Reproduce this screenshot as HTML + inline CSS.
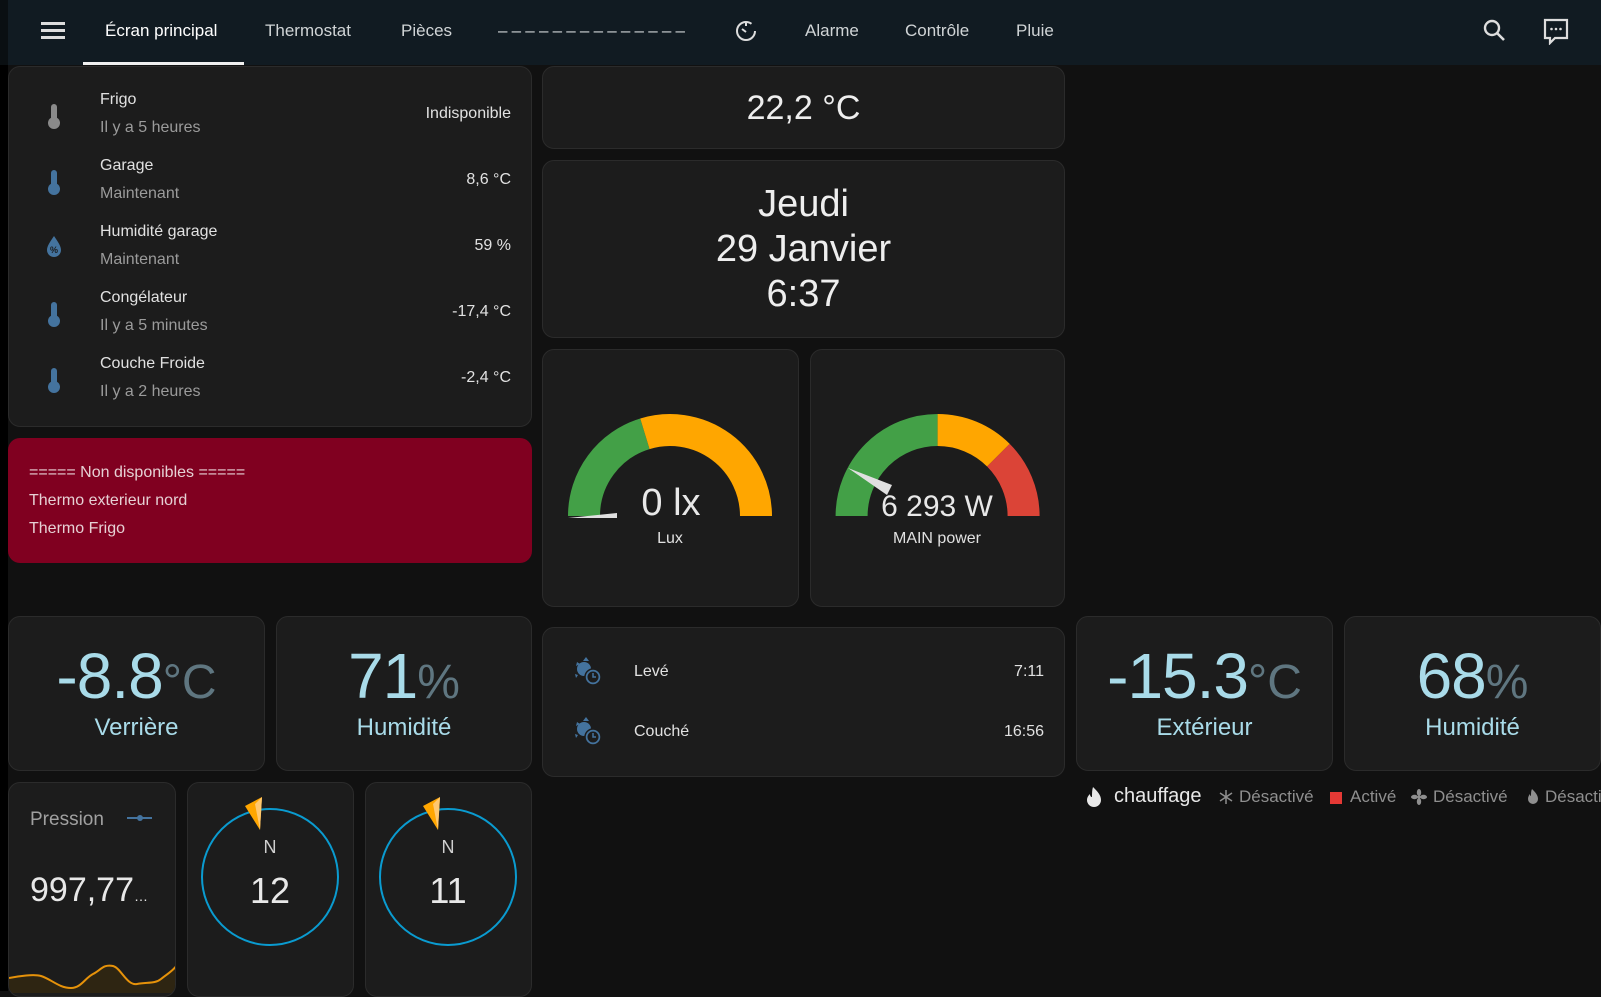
<!DOCTYPE html>
<html><head><meta charset="utf-8"><style>
*{box-sizing:border-box;margin:0;padding:0}
body{width:1601px;height:991px;background:#111111;font-family:"Liberation Sans",sans-serif;color:#e1e1e1;position:relative;overflow:hidden}
.a{position:absolute}
.card{position:absolute;background:#1c1c1c;border:1px solid #2b2b2b;border-radius:12px}
.nav{position:absolute;left:0;top:0;width:1601px;height:65px;background:#111b22}
.tab{position:absolute;top:21px;font-size:17px;color:#d0d4d6;white-space:nowrap}
.nm{position:absolute;left:91px;font-size:16px;color:#e1e1e1}
.sb{position:absolute;left:91px;font-size:16px;color:#9b9b9b}
.vl{position:absolute;right:20px;font-size:16px;color:#e1e1e1;text-align:right}
.big{position:absolute;width:100%;text-align:center;color:#a9dbe9;font-size:64px;letter-spacing:-1px}
.big span{font-size:48px;color:#5f7680;letter-spacing:0}
.lbl{position:absolute;width:100%;text-align:center;color:#a9dbe9;font-size:24px}
</style></head><body>
<div class="a" style="left:0;top:0;width:8px;height:991px;background:#000"></div>
<div class="nav"></div>
<div class="a" style="left:0;top:0;width:8px;height:65px;background:#0a0f12"></div>
<div class="a" style="left:41px;top:22px;width:24px;height:3px;background:#ddd"></div>
<div class="a" style="left:41px;top:29px;width:24px;height:3px;background:#ddd"></div>
<div class="a" style="left:41px;top:36px;width:24px;height:3px;background:#ddd"></div>
<div class="tab" style="left:105px;color:#fff">Écran principal</div>
<div class="a" style="left:83px;top:62px;width:161px;height:3px;background:#f0f0f0"></div>
<div class="tab" style="left:265px">Thermostat</div>
<div class="tab" style="left:401px">Pièces</div>
<div class="tab" style="left:498px;letter-spacing:4.2px">‒‒‒‒‒‒‒‒‒‒‒‒‒‒</div>
<svg class="a" style="left:734px;top:19px" width="24" height="24" viewBox="0 0 24 24"><circle cx="12" cy="12" r="9" fill="none" stroke="#ddd" stroke-width="2" stroke-dasharray="48 9"/><path d="M12 4v3M8 10l4 3" stroke="#ddd" stroke-width="2" fill="none"/></svg>
<div class="tab" style="left:805px">Alarme</div>
<div class="tab" style="left:905px">Contrôle</div>
<div class="tab" style="left:1016px">Pluie</div>
<svg class="a" style="left:1482px;top:18px" width="26" height="26" viewBox="0 0 26 26"><circle cx="10" cy="10" r="7" fill="none" stroke="#ddd" stroke-width="2.4"/><path d="M15 15l7 7" stroke="#ddd" stroke-width="2.6"/></svg>
<svg class="a" style="left:1542px;top:17px" width="28" height="28" viewBox="0 0 28 28"><path d="M3 3h22v18H13l-5 5v-5H3z" fill="none" stroke="#ddd" stroke-width="2.2"/><circle cx="9.5" cy="12" r="1.3" fill="#ddd"/><circle cx="14" cy="12" r="1.3" fill="#ddd"/><circle cx="18.5" cy="12" r="1.3" fill="#ddd"/></svg>

<div class="card" style="left:8px;top:66px;width:524px;height:361px">
 <div class="nm" style="top:24px">Frigo</div><div class="sb" style="top:52px">Il y a 5 heures</div><div class="vl" style="top:38px">Indisponible</div>
 <div class="nm" style="top:90px">Garage</div><div class="sb" style="top:118px">Maintenant</div><div class="vl" style="top:104px">8,6 °C</div>
 <div class="nm" style="top:156px">Humidité garage</div><div class="sb" style="top:184px">Maintenant</div><div class="vl" style="top:170px">59 %</div>
 <div class="nm" style="top:222px">Congélateur</div><div class="sb" style="top:250px">Il y a 5 minutes</div><div class="vl" style="top:236px">-17,4 °C</div>
 <div class="nm" style="top:288px">Couche Froide</div><div class="sb" style="top:316px">Il y a 2 heures</div><div class="vl" style="top:302px">-2,4 °C</div>
</div>
<svg class="a" style="left:0;top:0" width="1601" height="991">
 <defs><g id="th"><rect x="-3" y="-12" width="6" height="18" rx="3"/><circle cx="0" cy="7" r="6"/></g></defs>
 <use href="#th" x="54" y="116" fill="#8a8a8a"/>
 <use href="#th" x="54" y="182" fill="#44739e"/>
 <use href="#th" x="54" y="314" fill="#44739e"/>
 <use href="#th" x="54" y="380" fill="#44739e"/>
 <path d="M54 236c-4 6-7 10-7 14a7 7 0 0 0 14 0c0-4-3-8-7-14z" fill="#44739e"/>
 <text x="54" y="253" font-size="9" fill="#1c1c1c" text-anchor="middle" font-family="Liberation Sans" font-weight="bold">%</text>
</svg>

<div class="a" style="left:8px;top:438px;width:524px;height:125px;background:#800020;border-radius:12px;font-size:16px;color:#e6d0d4">
 <div class="a" style="left:21px;top:26px">===== Non disponibles =====</div>
 <div class="a" style="left:21px;top:54px">Thermo exterieur nord</div>
 <div class="a" style="left:21px;top:82px">Thermo Frigo</div>
</div>

<div class="card" style="left:542px;top:66px;width:523px;height:83px"><div class="a" style="width:100%;text-align:center;top:22px;font-size:34px;color:#eee">22,2 °C</div></div>
<div class="card" style="left:542px;top:160px;width:523px;height:178px;text-align:center;font-size:38px;color:#eee">
 <div class="a" style="width:100%;top:22px">Jeudi</div>
 <div class="a" style="width:100%;top:67px">29 Janvier</div>
 <div class="a" style="width:100%;top:112px">6:37</div>
</div>

<div class="card" style="left:542px;top:349px;width:257px;height:258px"></div>
<div class="card" style="left:810px;top:349px;width:255px;height:258px"></div>
<svg class="a" style="left:0;top:0" width="1601" height="991">
 <path d="M584 516A86 86 0 0 1 644.9 433.8" fill="none" stroke="#43a047" stroke-width="32"/>
 <path d="M644.9 433.8A86 86 0 0 1 756 516" fill="none" stroke="#ffa600" stroke-width="32"/>
 <polygon points="568,518 617,518 617,513" fill="#e0e0e0"/>
 <path d="M851.6 516A86 86 0 0 1 937.6 430" fill="none" stroke="#43a047" stroke-width="32"/>
 <path d="M937.6 430A86 86 0 0 1 998.4 455.2" fill="none" stroke="#ffa600" stroke-width="32"/>
 <path d="M998.4 455.2A86 86 0 0 1 1023.6 516" fill="none" stroke="#db4437" stroke-width="32"/>
 <polygon points="848,468 892,485 887,495" fill="#e0e0e0"/>
 <text x="671" y="515" font-size="38" fill="#e8e8e8" text-anchor="middle" font-family="Liberation Sans">0 lx</text>
 <text x="670" y="543" font-size="16" fill="#e1e1e1" text-anchor="middle" font-family="Liberation Sans">Lux</text>
 <text x="937" y="516" font-size="30" fill="#e8e8e8" text-anchor="middle" font-family="Liberation Sans">6 293 W</text>
 <text x="937" y="543" font-size="16" fill="#e1e1e1" text-anchor="middle" font-family="Liberation Sans">MAIN power</text>
</svg>

<div class="card" style="left:8px;top:616px;width:257px;height:155px"><div class="big" style="top:22px">-8.8<span>°C</span></div><div class="lbl" style="top:97px">Verrière</div></div>
<div class="card" style="left:276px;top:616px;width:256px;height:155px"><div class="big" style="top:22px">71<span>%</span></div><div class="lbl" style="top:97px">Humidité</div></div>
<div class="card" style="left:1076px;top:616px;width:257px;height:155px"><div class="big" style="top:22px">-15.3<span>°C</span></div><div class="lbl" style="top:97px">Extérieur</div></div>
<div class="card" style="left:1344px;top:616px;width:257px;height:155px"><div class="big" style="top:22px">68<span>%</span></div><div class="lbl" style="top:97px">Humidité</div></div>

<div class="card" style="left:542px;top:627px;width:523px;height:150px;font-size:16px;color:#e1e1e1">
 <div class="a" style="left:91px;top:35px">Levé</div><div class="a" style="right:20px;top:35px">7:11</div>
 <div class="a" style="left:91px;top:95px">Couché</div><div class="a" style="right:20px;top:95px">16:56</div>
</div>
<svg class="a" style="left:0;top:0" width="1601" height="991">
 <g id="sun" fill="#44739e"><circle cx="584" cy="669" r="7"/><path d="M586 657l3 4h-6zM577 662l-1 4 4-2zM575 674l1 4 2-3z"/><circle cx="593" cy="677" r="8" fill="#44739e" stroke="#1c1c1c" stroke-width="1.5"/><circle cx="593" cy="677" r="5.5" fill="#1c1c1c"/><path d="M593 673v4h3" stroke="#44739e" stroke-width="1.5" fill="none"/></g>
 <use href="#sun" y="60"/>
</svg>

<div class="card" style="left:8px;top:782px;width:168px;height:215px;overflow:hidden">
 <div class="a" style="left:21px;top:26px;font-size:19px;color:#a0a0a0">Pression</div>
 <div class="a" style="left:21px;top:88px;font-size:34px;color:#e8e8e8">997,77<span style="font-size:14px">…</span></div>
 <svg class="a" style="left:0;top:150px" width="168" height="60"><path d="M0 45c10-2 25-4 32-2 10 3 18 12 30 12 10 0 14-10 22-14s10-10 20-8c8 2 14 20 24 18 10-2 18 0 24-5s12-8 16-14V60H0z" fill="#2e2512"/><path d="M0 45c10-2 25-4 32-2 10 3 18 12 30 12 10 0 14-10 22-14s10-10 20-8c8 2 14 20 24 18 10-2 18 0 24-5s12-8 16-14" fill="none" stroke="#e6920a" stroke-width="2"/></svg>
</div>
<svg class="a" style="left:0;top:0" width="1601" height="991">
 <line x1="127" y1="818" x2="152" y2="818" stroke="#44739e" stroke-width="2"/><circle cx="140" cy="818" r="3" fill="#44739e"/>
</svg>
<div class="card" style="left:187px;top:782px;width:167px;height:215px"></div>
<div class="card" style="left:365px;top:782px;width:167px;height:215px"></div>
<svg class="a" style="left:0;top:0" width="1601" height="991">
 <circle cx="270" cy="877" r="68" fill="none" stroke="#0a9bd0" stroke-width="2"/>
 <circle cx="448" cy="877" r="68" fill="none" stroke="#0a9bd0" stroke-width="2"/>
 <polygon points="245,806 262,797 260,830" fill="#ffa600"/><polygon points="255,804 262,797 260,830" fill="#ffc870"/>
 <polygon points="423,806 440,797 438,830" fill="#ffa600"/><polygon points="433,804 440,797 438,830" fill="#ffc870"/>
 <g font-family="Liberation Sans" text-anchor="middle">
 <text x="270" y="853" font-size="18" fill="#cfcfcf">N</text><text x="270" y="903" font-size="36" fill="#e8e8e8">12</text>
 <text x="448" y="853" font-size="18" fill="#cfcfcf">N</text><text x="448" y="903" font-size="36" fill="#e8e8e8">11</text>
 </g>
</svg>

<svg class="a" style="left:0;top:0" width="1601" height="991">
 <path d="M1093 787c4 4 8 8 8 13a7 7 0 0 1-14 0c0-3 2-5 3-6 0 2 1 3 2 3 0-4 0-7 1-10z" fill="#e8e8e8"/>
 <g stroke="#8f8f8f" stroke-width="1.5"><line x1="1226" y1="790" x2="1226" y2="804"/><line x1="1220" y1="793" x2="1232" y2="801"/><line x1="1220" y1="801" x2="1232" y2="793"/></g>
 <rect x="1330" y="792" width="12" height="12" fill="#e53935"/>
 <g fill="#8f8f8f"><circle cx="1419" cy="797" r="1.5"/><ellipse cx="1419" cy="792.5" rx="2.2" ry="3.5"/><ellipse cx="1419" cy="801.5" rx="2.2" ry="3.5"/><ellipse cx="1414.5" cy="797" rx="3.5" ry="2.2"/><ellipse cx="1423.5" cy="797" rx="3.5" ry="2.2"/></g>
 <path d="M1532 789c3 3 6 6 6 10a5 5 0 0 1-10 0c0-2 1-4 2-5 0 2 1 2 1 2 0-3 0-5 1-7z" fill="#8f8f8f"/>
</svg>
<div class="a" style="left:1114px;top:785px;font-size:20px;color:#e8e8e8">chauffage</div>
<div class="a" style="left:1239px;top:787px;font-size:17px;color:#8f8f8f">Désactivé</div>
<div class="a" style="left:1350px;top:787px;font-size:17px;color:#8f8f8f">Activé</div>
<div class="a" style="left:1433px;top:787px;font-size:17px;color:#8f8f8f">Désactivé</div>
<div class="a" style="left:1545px;top:787px;font-size:17px;color:#8f8f8f;white-space:nowrap">Désactivé</div>
</body></html>
